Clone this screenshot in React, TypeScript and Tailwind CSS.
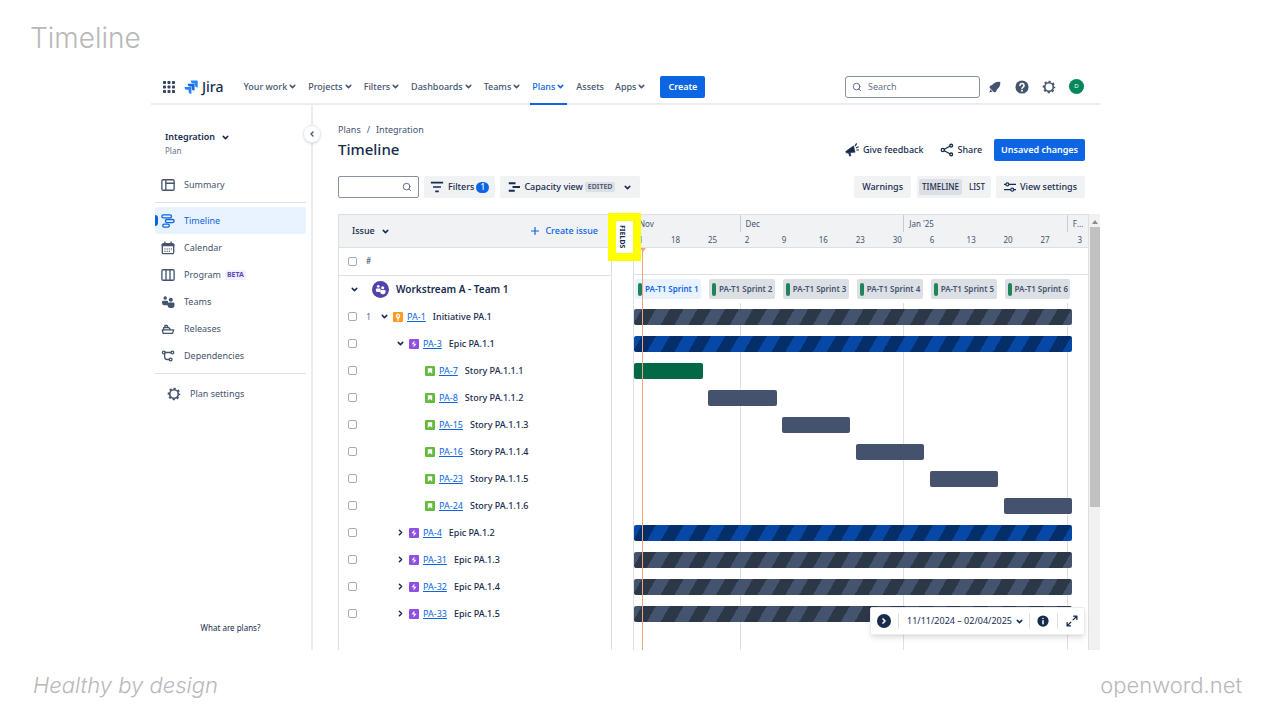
import type { ReactNode } from "react";
import { ChevronDown, ChevronLeft, ChevronRight, Search } from "lucide-react";

type IssueType = "initiative" | "epic" | "story";
type BarColor = "gray" | "blue" | "green" | "solid";

interface Issue {
  key: string;
  title: string;
  type: IssueType;
  rank?: number;
  open?: boolean;
  start: number;
  days: number;
  color: BarColor;
}

// The plan runs from 11 Nov to 4 Feb
const TOTAL_DAYS = 86;
const TODAY = 1.6;

const pct = (days: number) => `${(days / TOTAL_DAYS) * 100}%`;

const issues: Issue[] = [
  { key: "PA-1", title: "Initiative PA.1", type: "initiative", rank: 1, open: true, start: 0, days: 83, color: "gray" },
  { key: "PA-3", title: "Epic PA.1.1", type: "epic", open: true, start: 0, days: 83, color: "blue" },
  { key: "PA-7", title: "Story PA.1.1.1", type: "story", start: 0, days: 13, color: "green" },
  { key: "PA-8", title: "Story PA.1.1.2", type: "story", start: 14, days: 13, color: "solid" },
  { key: "PA-15", title: "Story PA.1.1.3", type: "story", start: 28, days: 13, color: "solid" },
  { key: "PA-16", title: "Story PA.1.1.4", type: "story", start: 42, days: 13, color: "solid" },
  { key: "PA-23", title: "Story PA.1.1.5", type: "story", start: 56, days: 13, color: "solid" },
  { key: "PA-24", title: "Story PA.1.1.6", type: "story", start: 70, days: 13, color: "solid" },
  { key: "PA-4", title: "Epic PA.1.2", type: "epic", start: 0, days: 83, color: "blue" },
  { key: "PA-31", title: "Epic PA.1.3", type: "epic", start: 0, days: 83, color: "gray" },
  { key: "PA-32", title: "Epic PA.1.4", type: "epic", start: 0, days: 83, color: "gray" },
  { key: "PA-33", title: "Epic PA.1.5", type: "epic", start: 0, days: 83, color: "gray" },
];

const months = [
  { name: "Nov", days: 20 },
  { name: "Dec", days: 31 },
  { name: "Jan '25", days: 31 },
  { name: "Feb", days: 4 },
];

const weeks = ["11", "18", "25", "2", "9", "16", "23", "30", "6", "13", "20", "27", "3"];

const sprints = [1, 2, 3, 4, 5, 6];

const barColors: Record<BarColor, string> = {
  gray: "bg-[repeating-linear-gradient(120deg,#44546f_0_7px,#2c3748_7px_19px,#44546f_19px_24px)]",
  blue: "bg-[repeating-linear-gradient(120deg,#0747a6_0_7px,#052f6b_7px_19px,#0747a6_19px_24px)]",
  green: "bg-[#036845]",
  solid: "bg-[#44526d]",
};

const indents: Record<IssueType, string> = {
  initiative: "pl-[6px]",
  epic: "pl-[22px]",
  story: "pl-[38px]",
};

const navItems = [
  { name: "Your work", menu: true },
  { name: "Projects", menu: true },
  { name: "Filters", menu: true },
  { name: "Dashboards", menu: true },
  { name: "Teams", menu: true },
  { name: "Plans", menu: true, active: true },
  { name: "Assets" },
  { name: "Apps", menu: true },
];

function Down({ className = "" }: { className?: string }) {
  return <ChevronDown className={`size-[9px] shrink-0 ${className}`} strokeWidth={4} />;
}

function Icon({ children, className = "size-4" }: { children: ReactNode; className?: string }) {
  return (
    <svg
      viewBox="0 0 16 16"
      fill="none"
      stroke="currentColor"
      strokeWidth="1.5"
      strokeLinecap="round"
      strokeLinejoin="round"
      className={`shrink-0 ${className}`}
    >
      {children}
    </svg>
  );
}

function GearIcon() {
  return (
    <Icon className="size-[14px]">
      <circle cx="8" cy="8" r="4.9" strokeWidth="1.9" />
      <circle cx="8" cy="8" r="6.3" strokeWidth="1.8" strokeLinecap="butt" strokeDasharray="2.6 2.348" strokeDashoffset="1.3" />
    </Icon>
  );
}

function JiraLogo() {
  return (
    <svg viewBox="0 0 24 24" className="size-[14px] shrink-0">
      <path d="M22.6 1H11.7a4.9 4.9 0 0 0 4.9 4.9h2v2a4.9 4.9 0 0 0 4.9 4.9V1.9A.9.9 0 0 0 22.6 1z" fill="#2684ff" />
      <path d="M17.2 6.4H6.3a4.9 4.9 0 0 0 4.9 4.9h2v2a4.9 4.9 0 0 0 4.9 4.9V7.3a.9.9 0 0 0-.9-.9z" fill="#1868db" />
      <path d="M11.8 11.9H.9a4.9 4.9 0 0 0 4.9 4.9h2v1.9a4.9 4.9 0 0 0 4.9 4.9V12.8a.9.9 0 0 0-.9-.9z" fill="#2684ff" />
    </svg>
  );
}

function PeopleShapes() {
  return (
    <g fill="currentColor" stroke="none">
      <circle cx="4.8" cy="3.4" r="2" />
      <circle cx="11.2" cy="5.4" r="2.3" />
      <path d="M1.2 8a1.5 1.5 0 0 1 1.5-1.5h4.2A1.5 1.5 0 0 1 8 7v4.8H4a2.8 2.8 0 0 1-2.8-2.8z" />
      <path d="M7.6 9.9A1.3 1.3 0 0 1 8.9 8.6h5.2a1.3 1.3 0 0 1 1.3 1.3v1.9a3 3 0 0 1-3 3h-1.8a3 3 0 0 1-3-3z" />
    </g>
  );
}

function TypeIcon({ type }: { type: IssueType }) {
  if (type === "initiative") {
    return (
      <svg viewBox="0 0 16 16" className="size-[10px] shrink-0">
        <rect width="16" height="16" rx="2" fill="#ff991f" />
        <path d="M8 2.6a3.6 3.6 0 0 0-2 6.6v1.6h4V9.2a3.6 3.6 0 0 0-2-6.600zM6.200 12h3.600v1.400H6.200z" fill="#fff" />
        <circle cx="8" cy="6.2" r="1.5" fill="#ff991f" />
      </svg>
    );
  }
  if (type === "epic") {
    return (
      <svg viewBox="0 0 16 16" className="size-[10px] shrink-0">
        <rect width="16" height="16" rx="2" fill="#904ee2" />
        <path d="M8.8 2.5 4 8.5h3.6l-.4 5L12 7.5H8.4z" fill="#fff" />
      </svg>
    );
  }
  return (
    <svg viewBox="0 0 16 16" className="size-[10px] shrink-0">
      <rect width="16" height="16" rx="2" fill="#63ba3c" />
      <path d="M4.5 3.5h7v9L8 9.5l-3.500 3z" fill="#fff" />
    </svg>
  );
}

function TopNav() {
  return (
    <header className="flex h-[35px] items-stretch border-b-2 border-[#ebecf0] pr-4 pl-3 text-[#44546f]">
      <button aria-label="Switch product" className="flex items-center">
        <svg viewBox="0 0 12 12" className="size-3" fill="#344563">
          {[0, 4.5, 9].map((y) => [0, 4.5, 9].map((x) => <rect key={`${x}-${y}`} x={x} y={y} width="3" height="3" rx="0.8" />))}
        </svg>
      </button>
      <a href="#home" className="ml-[9px] flex items-center gap-1 text-sm font-medium text-[#172b4d]">
        <JiraLogo />
        Jira
      </a>
      <nav className="ml-[18px] flex items-stretch gap-[7px] text-[9px] font-medium">
        {navItems.map((item) => (
          <button
            key={item.name}
            className={`flex items-center gap-px px-0.5 whitespace-nowrap ${
              item.active ? "-mb-0.5 border-b-2 border-[#0c66e4] text-[#0c66e4]" : ""
            }`}
          >
            {item.name}
            {item.menu && <Down />}
          </button>
        ))}
      </nav>
      <button className="ml-3 h-[22px] self-center rounded-[2px] bg-[#0c66e4] px-2 text-[9px] font-semibold text-white">
        Create
      </button>
      <div className="ml-auto flex items-center gap-[13px]">
        <label className="flex h-[22px] w-[135px] items-center gap-1.5 rounded-[3px] border border-[#8590a2] px-1.5">
          <Search className="size-[10px] shrink-0" />
          <input
            type="search"
            aria-label="Search"
            placeholder="Search"
            className="w-full min-w-0 text-[9px] outline-none placeholder:text-[#626f86]"
          />
        </label>
        <button aria-label="Notifications" className="-ml-[5px]">
          <Icon className="size-[14px]">
            <path
              d="M14 2.2c-3.500-.6-6.500.5-9 3.300L2.200 6.800 1.800 8.900l5 5.200 2.200-.3 1.200-2.900C13 8.700 14.400 5.700 14 2.200zM2.800 10.800l-1.300 3.400 3.600-1z"
              fill="currentColor"
              stroke="none"
            />
          </Icon>
        </button>
        <button aria-label="Help">
          <Icon className="size-[14px]">
            <circle cx="8" cy="8" r="7.5" fill="currentColor" stroke="none" />
            <path d="M5.700 6.200a2.300 2.300 0 1 1 3.500 2c-.8.5-1.200.8-1.200 1.600" stroke="#fff" strokeWidth="1.8" />
            <circle cx="8" cy="12.2" r="1.1" fill="#fff" stroke="none" />
          </Icon>
        </button>
        <button aria-label="Settings">
          <GearIcon />
        </button>
        <button
          aria-label="Profile"
          className="flex size-[15px] items-center justify-center rounded-full bg-[#00875a] text-[6px] text-white"
        >
          D
        </button>
      </div>
    </header>
  );
}

function SideLink({ icon, children, active }: { icon: ReactNode; children: ReactNode; active?: boolean }) {
  return (
    <a
      href="#plan"
      className={`relative flex h-[27px] items-center gap-[9px] rounded-[2px] pl-[6px] ${
        active ? "bg-[#e9f2ff] text-[#0c66e4]" : ""
      }`}
    >
      {active && <span className="absolute left-0 h-[11px] w-[3px] rounded-r bg-[#0c66e4]" />}
      {icon}
      <span className="flex items-center gap-1">{children}</span>
    </a>
  );
}

function Sidebar() {
  return (
    <aside className="relative flex w-[162px] shrink-0 flex-col border-r-2 border-[#ebecf0] pr-[5px] pl-1 text-[9px] text-[#44546f]">
      <button
        aria-label="Collapse sidebar"
        className="absolute top-5 -right-[10px] z-10 flex size-[18px] items-center justify-center rounded-full border border-[#ebecf0] bg-white shadow-sm"
      >
        <ChevronLeft className="size-2" strokeWidth={4} />
      </button>
      <button className="mt-[26px] ml-[10px] flex items-center gap-1.5 leading-3 font-semibold text-[#172b4d]">
        Integration
        <Down />
      </button>
      <p className="mt-0.5 mb-[14px] ml-[10px] text-[8px] leading-3 text-[#626f86]">Plan</p>

      <SideLink
        icon={
          <Icon className="size-[14px]">
            <rect x="1" y="2" width="14" height="12" rx="1.5" />
            <path d="M5.500 2v12M5.500 6H15" />
          </Icon>
        }
      >
        Summary
      </SideLink>
      <hr className="my-1 border-[#dcdfe4]" />
      <SideLink
        active
        icon={
          <Icon className="size-[14px]">
            <rect x="1" y="1" width="11" height="3.5" rx="1.7" />
            <rect x="5" y="6.3" width="10" height="3.5" rx="1.7" />
            <rect x="2" y="11.5" width="7.5" height="3.5" rx="1.7" />
          </Icon>
        }
      >
        Timeline
      </SideLink>
      <SideLink
        icon={
          <Icon className="size-[14px]">
            <rect x="1.5" y="3" width="13" height="11.5" rx="1.5" />
            <path d="M2 4.500h12" strokeWidth="3" />
            <path d="M4.500 1v2M11.500 1v2" />
            <path d="M4.500 9h.01M7 9h.01M9.500 9h.01M12 9h.01M4.500 11.700h.01M7 11.700h.01M9.500 11.700h.01" />
          </Icon>
        }
      >
        Calendar
      </SideLink>
      <SideLink
        icon={
          <Icon className="size-[14px]">
            <rect x="1" y="2" width="14" height="12" rx="1.5" />
            <path d="M5.700 2v12M10.300 2v12" />
          </Icon>
        }
      >
        Program
        <span className="rounded-[2px] bg-[#f3f0ff] px-0.5 text-[7px] leading-[10px] font-bold text-[#5e4db2]">BETA</span>
      </SideLink>
      <SideLink
        icon={
          <Icon className="size-[14px]">
            <PeopleShapes />
          </Icon>
        }
      >
        Teams
      </SideLink>
      <SideLink
        icon={
          <Icon className="size-[14px]">
            <path d="M1.500 9h13l-1.300 4H2.500zM3 9V6.500h6L11 9M4.500 6.500V4H7l1 2.500" />
          </Icon>
        }
      >
        Releases
      </SideLink>
      <SideLink
        icon={
          <Icon className="size-[14px]">
            <circle cx="3.2" cy="4" r="1.6" />
            <circle cx="13" cy="4" r="1.6" />
            <circle cx="11" cy="12" r="1.6" />
            <path d="M4.800 4h6.600M4.200 5.500v3.500a3 3 0 0 0 3 3h2" />
          </Icon>
        }
      >
        Dependencies
      </SideLink>
      <hr className="mt-1 mb-1.5 border-[#dcdfe4]" />
      <div className="pl-1.5">
        <SideLink icon={<GearIcon />}>Plan settings</SideLink>
      </div>
      <a href="#about" className="mt-auto mb-4 text-center text-[8px] leading-3 text-[#172b4d]">
        What are plans?
      </a>
    </aside>
  );
}

function PageHeader() {
  return (
    <div className="flex items-end justify-between text-[#172b4d]">
      <div>
        <nav className="flex gap-1.5 text-[9px] leading-[14px] text-[#44546f]">
          <a href="#plans">Plans</a>
          <span>/</span>
          <a href="#integration">Integration</a>
        </nav>
        <h2 className="text-[15px] leading-6 font-medium">Timeline</h2>
      </div>
      <div className="flex items-center text-[9px] font-medium">
        <button className="flex items-center gap-1">
          <Icon className="size-[14px]">
            <path d="M1 9.500 9.800 3.200l1.700 7.300L1.800 11.500zM4 11.500l1.300 3.500 1.500-.5-.8-3.200z" fill="currentColor" strokeWidth="0.6" />
            <path d="M11.800 3 13 1M13 5.500l2-1M13.500 8h2" strokeWidth="1.4" />
          </Icon>
          Give feedback
        </button>
        <button className="ml-4 flex items-center gap-1">
          <Icon className="size-[14px]">
            <circle cx="3.2" cy="8" r="1.8" />
            <circle cx="12.8" cy="3" r="1.6" />
            <circle cx="12.8" cy="13" r="1.6" />
            <path d="m5 7.200 6.200-3.500M5 8.800l6.200 3.500" />
          </Icon>
          Share
        </button>
        <button className="ml-3 h-[22px] rounded-[2px] bg-[#0c66e4] px-[7px] font-semibold text-white">
          Unsaved changes
        </button>
      </div>
    </div>
  );
}

function Toolbar() {
  const chip = "flex h-[22px] items-center rounded-[2px] bg-[#f1f2f4] whitespace-nowrap";
  return (
    <div className="mt-[15px] flex items-center text-[9px] font-medium text-[#172b4d]">
      <label className="flex h-[22px] w-[81px] items-center rounded-[2px] border border-[#8590a2] px-1.5">
        <input type="search" aria-label="Search issues" className="w-full min-w-0 outline-none" />
        <Search className="size-[10px] shrink-0 text-[#44546f]" />
      </label>
      <button className={`${chip} ml-[5px] px-1.5`}>
        <Icon className="mr-1 size-[14px]">
          <path d="M1 3h14M3.500 8h9M6 13h4" strokeWidth="1.9" strokeLinecap="butt" />
        </Icon>
        Filters
        <span className="ml-0.5 flex h-[11px] w-[13px] items-center justify-center rounded-full bg-[#0c66e4] text-[8px] text-white">
          1
        </span>
      </button>
      <button className={`${chip} ml-[5px] px-2`}>
        <Icon className="mr-1 size-3">
          <path d="M1 3h9M6 8h10M1 13h8" strokeWidth="2.8" strokeLinecap="butt" />
        </Icon>
        Capacity view
        <span className="mr-2 ml-0.5 rounded-[2px] bg-[#dcdfe4] px-[3px] text-[7px] leading-[10px] font-semibold text-[#44546f]">
          EDITED
        </span>
        <Down />
      </button>
      <button className={`${chip} ml-auto px-2`}>Warnings</button>
      <div className="ml-1.5 flex h-[22px] items-center rounded-[2px] bg-[#f1f2f4] px-0.5 text-[8px]">
        <button aria-pressed="true" className="h-4 rounded-[2px] bg-[#dcdfe4] px-[3px]">
          TIMELINE
        </button>
        <button aria-pressed="false" className="h-4 pr-1 pl-[7px]">
          LIST
        </button>
      </div>
      <button className={`${chip} ml-[5px] gap-1 px-2`}>
        <Icon className="size-3">
          <circle cx="4.5" cy="4.5" r="2" />
          <circle cx="11" cy="11.5" r="2" />
          <path d="M7 4.500h9M0 11.500h8.500M13.500 11.500H16M0 4.500h2" />
        </Icon>
        View settings
      </button>
    </div>
  );
}

function Check({ label }: { label: string }) {
  return (
    <input
      type="checkbox"
      aria-label={label}
      className="block size-[9px] appearance-none rounded-[2px] border border-[#a5adba] bg-white"
    />
  );
}

function IssueTable() {
  return (
    <div className="w-[274px] shrink-0 border-x border-[#dcdfe4] text-[9px] text-[#172b4d]">
      <div className="flex h-[34px] items-center justify-between border-y border-[#dcdfe4] bg-[#f1f2f4] px-[13px] font-medium">
        <button className="flex items-center gap-1.5">
          Issue
          <Down />
        </button>
        <button className="flex items-center gap-1.5 text-[#0c66e4]">
          <Icon className="size-2">
            <path d="M8 1v14M1 8h14" strokeWidth="2.4" />
          </Icon>
          Create issue
        </button>
      </div>
      <table className="w-full table-fixed border-collapse">
        <thead>
          <tr className="h-[27px] border-b border-[#dcdfe4] text-left font-normal">
            <th className="w-[27px] pl-[9px]">
              <Check label="Select all issues" />
            </th>
            <th className="w-3 text-[8px] font-medium text-[#44546f]">#</th>
            <th aria-label="Issue" />
          </tr>
        </thead>
        <tbody>
          <tr className="h-7">
            <td colSpan={3}>
              <div className="flex items-center pl-[11px] text-[10px] font-semibold">
                <button aria-label="Collapse Workstream A">
                  <Down />
                </button>
                <span className="mr-[7px] ml-[13px] flex size-[17px] items-center justify-center rounded-full bg-[#5243aa] text-white">
                  <Icon className="size-[11px]">
                    <PeopleShapes />
                  </Icon>
                </span>
                Workstream A - Team 1
              </div>
            </td>
          </tr>
          {issues.map((issue) => (
            <tr key={issue.key} className="h-[27px]">
              <td className="pl-[9px]">
                <Check label={`Select ${issue.key}`} />
              </td>
              <td className="text-[#626f86]">{issue.rank}</td>
              <td>
                <div className={`flex items-center ${indents[issue.type]}`}>
                  {issue.type === "story" ? (
                    <span className="w-[9px]" />
                  ) : (
                    <button aria-label={`Toggle ${issue.key}`} className="mr-1 -ml-1">
                      {issue.open ? <Down /> : <ChevronRight className="size-[9px]" strokeWidth={4} />}
                    </button>
                  )}
                  <TypeIcon type={issue.type} />
                  <a href={`#${issue.key}`} className="ml-1 text-[#0c66e4] underline">
                    {issue.key}
                  </a>
                  <span className="ml-[7px] font-medium">{issue.title}</span>
                </div>
              </td>
            </tr>
          ))}
        </tbody>
      </table>
    </div>
  );
}

function DateBar() {
  return (
    <div className="absolute right-[3px] bottom-[15px] z-20 flex h-7 items-center rounded-[2px] border border-[#ebecf0] bg-white px-1.5 text-[9px] text-[#172b4d] shadow-md">
      <button aria-label="Jump to today" className="flex size-[14px] items-center justify-center rounded-full bg-[#172b4d] text-white">
        <ChevronRight className="size-2" strokeWidth={5} />
      </button>
      <button className="mx-[7px] flex h-4 items-center gap-[3px] border-x border-[#dcdfe4] pr-[5px] pl-2 whitespace-nowrap">
        11/11/2024 – 02/04/2025
        <Down />
      </button>
      <button aria-label="Legend">
        <Icon className="size-3">
          <circle cx="8" cy="8" r="7.5" fill="currentColor" stroke="none" />
          <path d="M8 7.500v4M8 4.500h.01" stroke="#fff" strokeWidth="2" />
        </Icon>
      </button>
      <span className="mx-2 h-4 border-l border-[#dcdfe4]" />
      <button aria-label="Full screen">
        <Icon className="size-3">
          <path d="M10 1.500h4.500V6M14 2l-4.500 4.500M6 14.500H1.500V10M2 14l4.500-4.500" strokeWidth="1.7" />
        </Icon>
      </button>
    </div>
  );
}

function Gantt() {
  return (
    <div className="relative flex min-w-0 flex-1 flex-col border-x border-[#dcdfe4]">
      <div className="h-[34px] overflow-hidden border-y border-[#dcdfe4] bg-[#f1f2f4] text-[8px] text-[#44546f]">
        <div className="flex h-[17px]">
          {months.map((month) => (
            <div
              key={month.name}
              className="truncate border-l border-[#c7ccd4] px-[5px] leading-[17px] first:border-l-0"
              style={{ width: pct(month.days) }}
            >
              {month.name}
            </div>
          ))}
        </div>
        <div className="flex h-4">
          {weeks.map((week) => (
            <div key={week} className="shrink-0 leading-4" style={{ width: pct(7) }}>
              {week}
            </div>
          ))}
        </div>
      </div>
      <div className="relative flex-1">
        <div className="h-[27px] border-b border-[#dcdfe4]" />
        <div className="absolute inset-x-0 top-[55px] bottom-0 flex">
          {months.map((month) => (
            <div
              key={month.name}
              className="border-l border-[#dcdfe4] first:border-l-0"
              style={{ width: pct(month.days) }}
            />
          ))}
        </div>
        <div className="relative flex h-7 items-center">
          {sprints.map((sprint) => (
            <div key={sprint} className="shrink-0 pl-px" style={{ width: pct(14) }}>
              <div
                className={`mr-[7px] flex h-5 items-center gap-[3px] overflow-hidden rounded-[2px] pl-[3px] text-[8px] font-semibold whitespace-nowrap ${
                  sprint === 1 ? "bg-[#e9f2ff] text-[#0c66e4]" : "bg-[#dcdfe4] text-[#44546f]"
                }`}
              >
                <span className="h-[13px] w-1 shrink-0 rounded-[2px] bg-[#1f845a]" />
                PA-T1 Sprint {sprint}
              </div>
            </div>
          ))}
        </div>
        {issues.map((issue) => (
          <div key={issue.key} className="relative flex h-[27px] items-center">
            <div
              className={`h-4 rounded-[2px] ${barColors[issue.color]}`}
              style={{ marginLeft: pct(issue.start), width: pct(issue.days) }}
            />
          </div>
        ))}
        <div className="absolute inset-y-0 border-l border-[#f5a37a]" style={{ left: pct(TODAY) }}>
          <span className="absolute top-0 -left-[3px] border-x-[3px] border-t-[4px] border-x-transparent border-t-[#f5a37a]" />
        </div>
      </div>
      <DateBar />
    </div>
  );
}

export default function App() {
  return (
    <div className="flex min-h-screen flex-col bg-white font-['Noto_Sans','Open_Sans',sans-serif]">
      <h1 className="h-[70px] pt-4 pl-[30px] font-['Inter',sans-serif] text-[28px] leading-[44px] font-light text-[#b8b8b8]">
        Timeline
      </h1>

      <div className="mr-[180px] ml-[151px] flex flex-1 flex-col">
        <TopNav />
        <div className="flex flex-1">
          <Sidebar />
          <main className="flex min-w-0 flex-1 flex-col pt-[18px] pl-[25px]">
            <div className="pr-[15px]">
              <PageHeader />
              <Toolbar />
            </div>
            <div className="mt-4 flex flex-1">
              <IssueTable />
              <div className="relative w-[21px] shrink-0">
                <div className="h-[34px] border-y border-[#dcdfe4] bg-[#f1f2f4]" />
                <button className="absolute -top-px -left-1 z-10 flex h-12 w-[33px] items-end justify-center border-8 border-[#ffff00] bg-white text-[7px] leading-3 font-bold text-[#172b4d] [writing-mode:vertical-rl]">
                  FIELDS
                </button>
              </div>
              <Gantt />
              {/* Scrollbar */}
              <div className="flex w-[11px] shrink-0 flex-col bg-[#f1f1f1]">
                <span className="mx-auto mt-1.5 mb-[3px] border-x-[3px] border-b-[4px] border-x-transparent border-b-[#8b8b8b]" />
                <span className="ml-px h-[280px] bg-[#c1c1c1]" />
              </div>
            </div>
          </main>
        </div>
      </div>

      <footer className="flex h-[70px] items-center justify-between pr-[38px] pl-[33px] font-['Inter',sans-serif] text-[22px] font-light text-[#b8b8b8]">
        <span className="italic">Healthy by design</span>
        <a href="#openword">openword.net</a>
      </footer>
    </div>
  );
}
